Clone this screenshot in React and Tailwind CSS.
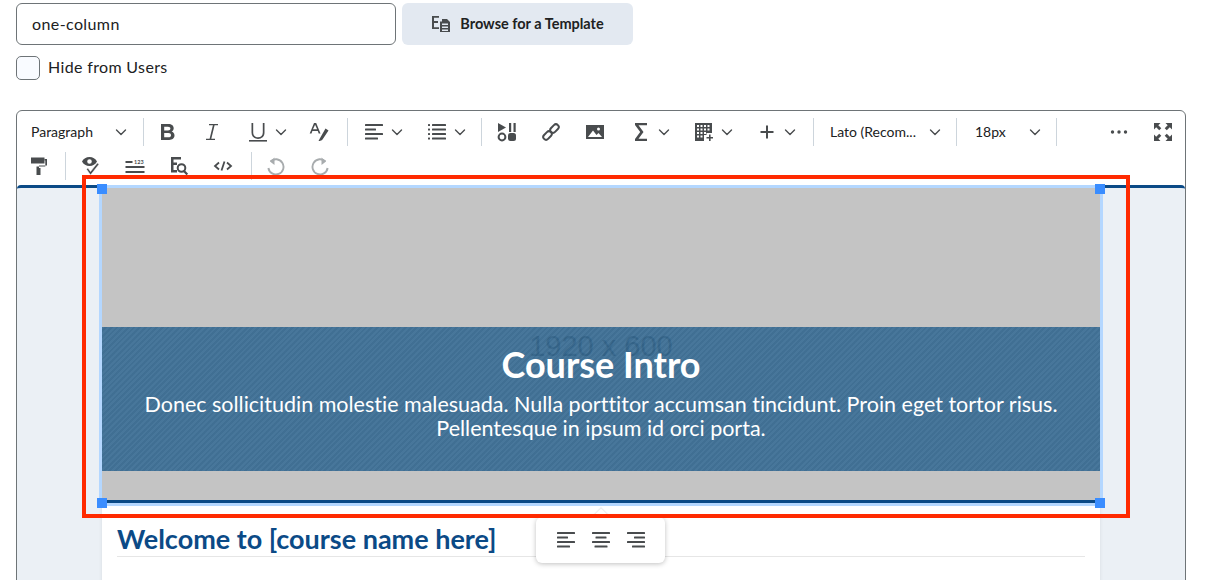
const ink = '#494c4e';

function Chevron() {
  return (
    <svg width="14" height="14" viewBox="0 0 14 14" fill="none" stroke={ink} strokeWidth="1.4" strokeLinecap="round" strokeLinejoin="round" className="shrink-0">
      <path d="M2.5 5l4.5 4.5L11.5 5" />
    </svg>
  );
}

function Icon({ children, w = 20, h = 20 }) {
  return (
    <svg width={w} height={h} viewBox="0 0 20 20" fill={ink} className="shrink-0">
      {children}
    </svg>
  );
}

function Btn({ children }) {
  return <div className="flex h-[34px] w-[44px] shrink-0 items-center justify-center">{children}</div>;
}

function SplitBtn({ children }) {
  return (
    <div className="flex h-[34px] w-[63px] shrink-0 items-center gap-[6px] pl-[14px]">
      {children}
      <Chevron />
    </div>
  );
}

function Sep({ className }) {
  return <div className={`h-[28px] w-px shrink-0 bg-[#cdd5dc] ${className}`} />;
}

const lines = (xs) =>
  xs.map(([x, y, w], i) => <rect key={i} x={x} y={y} width={w} height="2" rx="0.5" />);

const AlignLeft = () => <Icon>{lines([[1, 2, 18], [1, 6.5, 11], [1, 11, 18], [1, 15.5, 13]])}</Icon>;
const AlignCenter = () => <Icon>{lines([[1, 2, 18], [4.5, 6.5, 11], [1, 11, 18], [3.5, 15.5, 13]])}</Icon>;
const AlignRight = () => <Icon>{lines([[1, 2, 18], [8, 6.5, 11], [1, 11, 18], [6, 15.5, 13]])}</Icon>;

function Toolbar() {
  return (
    <div className="pt-[4px] text-[14px] text-[#202122]">
      <div className="flex items-center">
        <div className="flex h-[34px] w-[126px] shrink-0 items-center justify-between pb-[1px] pl-[14px] pr-[15px]">
          <span>Paragraph</span>
          <Chevron />
        </div>
        <Sep className="mr-[2px]" />
        <Btn>
          <Icon>
            <path fillRule="evenodd" d="M3 2h7.500c3 0 5.200 1.600 5.200 4.200 0 1.600-.8 2.800-2.100 3.400 1.700.6 2.900 2 2.900 4 0 2.800-2.300 4.400-5.300 4.400H3V2zm3.200 2.700v3.800h3.800c1.500 0 2.400-.7 2.400-1.900s-.9-1.900-2.400-1.900H6.200zm0 6.300v4.300h4.200c1.600 0 2.600-.8 2.600-2.150S12 11 10.400 11H6.200z" />
          </Icon>
        </Btn>
        <Btn>
          <Icon>
            <path d="M7 2h9v1.300h-3.400L9.300 16.700H13V18H4v-1.300h3.600L10.900 3.300H7z" />
          </Icon>
        </Btn>
        <SplitBtn>
          <Icon>
            <path d="M3.500 1h1.700v9.500c0 3 1.800 4.700 4.800 4.700s4.800-1.700 4.800-4.700V1h1.700v9.600c0 4-2.600 6.300-6.500 6.300s-6.500-2.300-6.500-6.300z" />
            <rect x="1" y="18" width="18" height="1.600" />
          </Icon>
        </SplitBtn>
        <Btn>
          <Icon>
            <path fillRule="evenodd" d="M5 1h2.200l4.300 10.500H9.700l-.9-2.500H3.400l-.9 2.500H.7zM4 7.300h4.100L6.100 2.800z" />
            <path d="M16.500 6.500l3 2-6 9c-.8 1-2.400 1.600-4 1.500.6-.7.800-1.500 1.300-2.500z" />
          </Icon>
        </Btn>
        <Sep className="ml-[6px] mr-[2px]" />
        <SplitBtn>
          <AlignLeft />
        </SplitBtn>
        <SplitBtn>
          <Icon>
            {lines([[5, 2, 14], [5, 6.500, 14], [5, 11, 14], [5, 15.500, 14], [1, 2, 2], [1, 6.500, 2], [1, 11, 2], [1, 15.500, 2]])}
          </Icon>
        </SplitBtn>
        <Sep className="ml-[5px] mr-[3px]" />
        <Btn>
          <Icon>
            <path d="M1 1l8 4.500L1 10z" />
            <rect x="12" y="1" width="2.200" height="9" />
            <rect x="16.500" y="1" width="2.200" height="9" />
            <circle cx="5" cy="15" r="3.400" fill="none" stroke={ink} strokeWidth="2" />
            <rect x="11" y="11" width="8" height="8" rx="2.500" />
          </Icon>
        </Btn>
        <Btn>
          <Icon>
            <g fill="none" stroke={ink} strokeWidth="2">
              <rect x="10.700" y="1.700" width="5.600" height="9.600" rx="2.800" transform="rotate(45 13.500 6.500)" />
              <rect x="3.700" y="8.700" width="5.600" height="9.600" rx="2.800" transform="rotate(45 6.500 13.500)" />
            </g>
          </Icon>
        </Btn>
        <Btn>
          <Icon>
            <path fillRule="evenodd" d="M1 3h18v14H1zm12.500 2.500a1.500 1.500 0 100 3 1.500 1.500 0 000-3zM3 15h14l-3.500-4-2 2-3.500-4.500z" />
          </Icon>
        </Btn>
        <SplitBtn>
          <Icon>
            <path d="M4 1h12v2.200H7.500l5 6.800-5 6.800H16V19H4v-2l5.200-7L4 3z" />
          </Icon>
        </SplitBtn>
        <SplitBtn>
          <Icon>
            <path fillRule="evenodd" d="M1 1h17v10h-5.500v2H10v6H1zM3 3v2h2V3zm3.500 0v2h2V3zM10 3v2h2V3zm3.500 0v2h2V3zM3 6.500v2h2v-2zm3.500 0v2h2v-2zm3.500 0v2h2v-2zm3.500 0v2h2v-2zM3 10v2h2v-2zm3.500 0v2h2v-2zM10 10v2h2v-2zM3 13.500v2h2v-2zm3.500 0v2h2v-2z" />
            <path d="M15 12.500h1.600V15H19v1.600h-2.400V19H15v-2.400h-2.500V15H15z" />
          </Icon>
        </SplitBtn>
        <SplitBtn>
          <Icon>
            <path d="M9 3.500h2V9h5.500v2H11v5.500H9V11H3.500V9H9z" />
          </Icon>
        </SplitBtn>
        <Sep className="ml-[7px]" />
        <div className="flex h-[34px] w-[142px] shrink-0 items-center justify-between pb-[1px] pl-[16px] pr-[14px]">
          <span>Lato (Recom...</span>
          <Chevron />
        </div>
        <Sep />
        <div className="flex h-[34px] w-[99px] shrink-0 items-center justify-between pb-[1px] pl-[18px] pr-[14px]">
          <span>18px</span>
          <Chevron />
        </div>
        <Sep />
        <div className="flex-1" />
        <Btn>
          <Icon>
            <circle cx="3.500" cy="10" r="1.700" />
            <circle cx="10" cy="10" r="1.700" />
            <circle cx="16.500" cy="10" r="1.700" />
          </Icon>
        </Btn>
        <Btn>
          <Icon>
            <path d="M1 1h6.500L5.300 3.200l3 3L6.200 8.300l-3-3L1 7.500zM19 1v6.500l-2.200-2.200-3 3-2.100-2.100 3-3L12.500 1zM1 19v-6.500l2.200 2.200 3-3 2.100 2.100-3 3L7.500 19zM19 19h-6.500l2.200-2.200-3-3 2.100-2.100 3 3 2.200-2.200z" />
          </Icon>
        </Btn>
      </div>
      <div className="flex items-center">
        <div className="flex h-[34px] w-[43px] shrink-0 items-center justify-center">
          <Icon>
            <path d="M2 1.500h13.500v6H2z" />
            <path d="M15.500 3H18v6.500H10V12h1.500v7h-4v-8.500H16.300V4.500h-.8z" />
          </Icon>
        </div>
        <Sep className="ml-[5px] mr-[3px]" />
        <Btn>
          <Icon>
            <path fillRule="evenodd" d="M8.500 1c3.300 0 6 1.700 7.500 4.500C14.500 8.300 11.800 10 8.500 10S2.500 8.300 1 5.500C2.500 2.700 5.200 1 8.500 1zm0 2.200a2.300 2.300 0 100 4.600 2.300 2.300 0 000-4.600z" />
            <path d="M5.500 13.200l1.400-1.200 2.600 3.600 6.800-8.600 1.700 1.300-8.500 10.700z" stroke="#fff" strokeWidth="0.500" />
          </Icon>
        </Btn>
        <Btn>
          <Icon>
            <rect x="0.500" y="5" width="7" height="2" />
            <text x="9" y="7.500" fontSize="5.500" fontWeight="700" fontFamily="Lato, sans-serif">123</text>
            <rect x="0.500" y="10" width="19" height="2" />
            <rect x="0.500" y="15" width="19" height="2" />
          </Icon>
        </Btn>
        <Btn>
          <Icon>
            <path d="M2 1h10v2.500H4.500v3H8V9H4.500v5H8v2.500H2z" />
            <circle cx="12.500" cy="12" r="3.800" fill="none" stroke={ink} strokeWidth="2" />
            <path d="M15 15l3.300 3.500" stroke={ink} strokeWidth="2.200" />
          </Icon>
        </Btn>
        <Btn>
          <Icon>
            <path d="M6 6.500L2 10l4 3.500M14 6.500l4 3.500-4 3.500M11.500 5.500l-3 9" fill="none" stroke={ink} strokeWidth="1.800" />
          </Icon>
        </Btn>
        <Sep className="ml-[6px] mr-[2px]" />
        <Btn>
          <svg width="20" height="20" viewBox="0 0 20 20" fill="none" stroke="#a8acae" strokeWidth="1.900">
            <path d="M4.500 5.500A7.600 7.600 0 112.400 12" />
            <path d="M8.500 1.500L4 5.500l4.500 3.500" fill="#a8acae" stroke="none" />
          </svg>
        </Btn>
        <Btn>
          <svg width="20" height="20" viewBox="0 0 20 20" fill="none" stroke="#a8acae" strokeWidth="1.900">
            <path d="M15.500 5.500A7.600 7.600 0 1017.600 12" />
            <path d="M11.500 1.500L16 5.500l-4.500 3.500" fill="#a8acae" stroke="none" />
          </svg>
        </Btn>
      </div>
    </div>
  );
}

function Handle({ className }) {
  return <div className={`absolute h-[10px] w-[10px] bg-[#3a8dff] ${className}`} />;
}

function Banner() {
  return (
    <div className="relative h-[315px] border-b-[3px] border-[#0b4a86] bg-[#c4c4c4] pt-[139px] outline-[3px] outline-[#b4d7ff]">
      <span className="absolute left-0 right-0 top-[141px] text-center font-['Liberation_Sans',sans-serif] text-[29px] leading-[34px] text-[#3c3c3c]">1920 x 600</span>
      <div className="relative flex h-[144px] flex-col items-center bg-[repeating-linear-gradient(135deg,rgba(58,110,150,0.9)_0px,rgba(58,110,150,0.9)_2px,rgba(50,102,142,0.9)_2px,rgba(50,102,142,0.9)_4px)] px-[20px] pt-[17px] text-center text-white">
        <h2 className="text-[36px] font-bold leading-[40px]">Course Intro</h2>
        <p className="mt-[8px] text-[21.5px] leading-[24px] [font-variant-ligatures:none]">
          Donec sollicitudin molestie malesuada. Nulla porttitor accumsan tincidunt. Proin eget tortor risus.
          <br />
          Pellentesque in ipsum id orci porta.
        </p>
      </div>
      <Handle className="-left-[5px] -top-[4px]" />
      <Handle className="-right-[5px] -top-[4px]" />
      <Handle className="-bottom-[8px] -left-[5px]" />
      <Handle className="-bottom-[8px] -right-[5px]" />
    </div>
  );
}

export default function App() {
  return (
    <div className="relative h-[580px] overflow-hidden bg-white font-['Lato',sans-serif] text-[#202122]">
      <div className="flex gap-[6px] pl-[16px] pt-[3px]">
        <div className="flex h-[42px] w-[380px] items-center rounded-[6px] border border-[#6e7477] pl-[15px] text-[16px] tracking-[0.4px]">
          one-column
        </div>
        <div className="flex h-[42px] w-[231px] items-center justify-center gap-[9px] rounded-[6px] bg-[#e3e9f1] text-[14.5px] font-bold">
          <svg width="20" height="20" viewBox="0 0 20 20" fill={ink}>
            <path d="M1 2h7v1.800H3v3.300h4v1.800H3v4.300h5v1.800H1z" />
            <path fillRule="evenodd" d="M11 5h5l3 3v10H9V7.500h2zm0 4.500v1.500h6V9.500zm0 3v1.500h6v-1.500zm0 3V17h6v-1.500z" />
          </svg>
          <span className="mb-[1px]">Browse for a Template</span>
        </div>
      </div>
      <label className="flex items-start gap-[8px] pl-[16px] pt-[11px] text-[16px] tracking-[0.35px]">
        <span className="h-[24px] w-[24px] rounded-[5px] border border-[#6e7477] bg-[#f9fbff]" />
        <span className="leading-[22px]">Hide from Users</span>
      </label>
      <div className="ml-[16px] mr-[27px] mt-[30px] h-[600px] rounded-t-[6px] border border-[#6e7477]">
        <Toolbar />
        <div className="mt-[2px] h-full rounded-t-[4px] border-t-[3px] border-[#0b4a86] bg-[#ebf0f5] px-[85px]">
          <div className="h-full bg-white shadow-[0_0_4px_rgba(0,0,0,0.08)]">
            <Banner />
            <div className="pl-[15px] pr-[15px] pt-[20px]">
              <h1 className="border-b border-[#e6e6e6] pb-[1px] text-[27px] font-bold leading-[32px] text-[#0b4a86]">
                Welcome to [course name here]
              </h1>
            </div>
          </div>
        </div>
      </div>

      <div className="absolute left-[536px] top-[517px] flex h-[46px] w-[129px] items-center justify-center gap-[15px] rounded-[6px] bg-white shadow-[0_1px_5px_rgba(0,0,0,0.25)]">
        <div className="absolute -top-[6px] left-[59px] h-[12px] w-[12px] rotate-45 bg-white shadow-[-1px_-1px_1px_rgba(0,0,0,0.08)]" />
        <AlignLeft />
        <AlignCenter />
        <AlignRight />
      </div>

      <div className="absolute left-[82px] top-[175px] h-[343px] w-[1048px] border-4 border-[#ff2a00]" />
    </div>
  );
}
